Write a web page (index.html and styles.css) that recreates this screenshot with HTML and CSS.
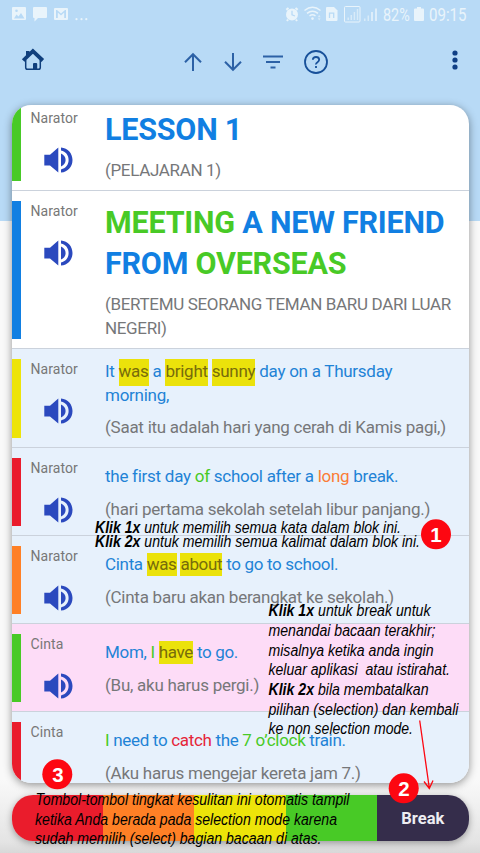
FILE: index.html
```html
<!DOCTYPE html>
<html lang="id">
<head>
<meta charset="utf-8">
<title>Lesson 1</title>
<link rel="stylesheet" href="styles.css">
</head>
<body>
<svg class="defs" aria-hidden="true">
  <symbol id="speaker" viewBox="0 0 29 26">
    <path d="M0.3 7.800H6L14.3 0.6V25.600L6 18.600H0.3Z"/>
    <path d="M17 6.600Q21.600 9 21.600 13.100T17 19.600Z"/>
    <path d="M17 0.400C24 1 28.500 6.300 28.500 13S24 25 17 25.600V22.400C21.800 21.300 24.600 17.700 24.600 13S21.800 4.700 17 3.600Z"/>
  </symbol>
</svg>
<div class="screen">
  <header class="top">
    <div class="status">
      <svg class="status-left" width="78" height="18" viewBox="0 0 78 18">
        <path fill-rule="evenodd" d="M1 0H13Q14 0 14 1V12Q14 13 13 13H1Q0 13 0 12V1Q0 0 1 0ZM2 11.500H12.500L9 6L6.500 9.500L4.500 7.500ZM4.500 2.500A1.300 1.300 0 1 0 4.500 5.100A1.300 1.300 0 1 0 4.500 2.500Z"/>
        <path d="M22 0H34Q35 0 35 1V10Q35 11 34 11H26L22.500 14.500V11H22Q21 11 21 10V1Q21 0 22 0Z"/>
        <path fill-rule="evenodd" d="M43 1H55Q56 1 56 2V12Q56 13 55 13H43Q42 13 42 12V2Q42 1 43 1ZM44 3V11H45.800V5.500L49 8.500L52.200 5.500V11H54V3H53L49 6.500L45 3Z"/>
        <circle cx="64.500" cy="12.200" r="1.100"/><circle cx="69.500" cy="12.200" r="1.100"/><circle cx="74.300" cy="12.200" r="1.100"/>
      </svg>
      <div class="status-right">
        <svg width="94" height="18" viewBox="285 6 94 18">
          <circle cx="293" cy="14.500" r="6"/>
          <path class="line thick" d="M287.300 9.800L289.500 8M298.700 9.800L296.500 8M289 19.500L288 21M297 19.500L298 21"/>
          <path class="cut" d="M293 10.800V14.800L296 16"/>
          <path class="line" d="M305.500 10.500Q313.500 4 321.500 10.500M308 13.300Q313.500 9 319 13.300M310.500 16Q313.500 13.600 316.500 16"/>
          <circle cx="313.500" cy="18.600" r="1.300"/>
          <path class="faint" d="M318.800 17.200L320.200 14.800L321.600 17.200ZM318.800 18.200L320.200 20.600L321.600 18.200Z"/>
          <path d="M328 7H335L338.500 10.500V20Q338.500 21 337.500 21H328Q327 21 327 20V8Q327 7 328 7Z"/>
          <path class="cut" d="M330.500 18V12.500M331 13.200H334.700V18"/>
          <rect class="line thin" x="345.500" y="6.500" width="15.500" height="15.500" rx="1"/>
          <path class="line faint" d="M349.200 20V17.500M352.300 20V15M355.400 20V12M358.500 20V9"/>
          <path class="line faint" d="M365.800 21V18.500M369.300 21V15.500"/>
          <path class="line" d="M373 21V12M377 21V8.500"/>
        </svg>
        <span class="pct">82%</span>
        <svg width="10" height="15" viewBox="0 0 10 15"><path d="M3 0H7V1.500H9Q10 1.500 10 2.500V13Q10 14 9 14H1Q0 14 0 13V2.500Q0 1.500 1 1.500H3Z"/></svg>
        <span class="time">09:15</span>
      </div>
    </div>
    <nav class="toolbar">
      <svg class="home" width="24" height="24" viewBox="0 0 24 24">
        <path class="roof" d="M2.200 12.500L11.900 3.200L21.800 12.500"/>
        <path class="chimney" d="M5 3H8.500V7L5 10Z"/>
        <path class="walls" d="M4.700 12V19.500Q4.700 21.300 6.500 21.300H17.500Q19.300 21.300 19.300 19.500V12"/>
        <path class="door" d="M12 22V16Q12 15 13 15H15.200Q16.200 15 16.200 16V22Z"/>
      </svg>
      <div class="actions">
        <svg width="18" height="20" viewBox="0 0 18 20"><path d="M9 19V3M1 10.200L9 2.200L17 10.200"/></svg>
        <svg width="18" height="20" viewBox="0 0 18 20"><path d="M9 1V17M1 9.800L9 17.800L17 9.800"/></svg>
        <svg class="filter" width="20" height="20" viewBox="0 0 20 20"><path d="M0 4.500H20M3 10H17M7.500 15.500H12.500"/></svg>
        <svg class="help" width="24" height="24" viewBox="0 0 24 24"><circle cx="12" cy="12" r="11"/><path d="M8.800 9.800Q9 7 12 7T15.200 9.600Q15.200 11.100 13.500 12.200T12 14.500M12 15.900V18"/></svg>
      </div>
      <svg class="more" width="6" height="20" viewBox="0 0 6 20"><circle cx="3" cy="3" r="2.600"/><circle cx="3" cy="10" r="2.600"/><circle cx="3" cy="17" r="2.600"/></svg>
    </nav>
  </header>

  <main class="card">
    <section class="row first">
      <i class="bar green-bg"></i>
      <div class="who"><span>Narator</span><svg class="speaker"><use href="#speaker"/></svg></div>
      <div class="copy"><h1 class="l1">LESSON 1</h1><p class="tr t1">(PELAJARAN 1)</p></div>
    </section>
    <section class="row title">
      <i class="bar blue-bg"></i>
      <div class="who"><span>Narator</span><svg class="speaker"><use href="#speaker"/></svg></div>
      <div class="copy">
        <h1 class="l2"><b class="green">MEETING</b> A NEW FRIEND<br>FROM <b class="green">OVERSEAS</b></h1>
        <p class="tr t2">(BERTEMU SEORANG TEMAN BARU DARI LUAR<br>NEGERI)</p>
      </div>
    </section>
    <section class="row tinted tall">
      <i class="bar yellow-bg"></i>
      <div class="who"><span>Narator</span><svg class="speaker"><use href="#speaker"/></svg></div>
      <div class="copy">
        <p class="en e3">It <mark>was</mark> a <mark>bright</mark> <mark>sunny</mark> day on a Thursday<br>morning,</p>
        <p class="tr t3">(Saat itu adalah hari yang cerah di Kamis pagi,)</p>
      </div>
    </section>
    <section class="row tinted">
      <i class="bar red-bg"></i>
      <div class="who"><span>Narator</span><svg class="speaker"><use href="#speaker"/></svg></div>
      <div class="copy">
        <p class="en e4">the first day <b class="green">of</b> school after a <b class="orange">long</b> break.</p>
        <p class="tr t4">(hari pertama sekolah setelah libur panjang.)</p>
      </div>
    </section>
    <section class="row tinted">
      <i class="bar orange-bg"></i>
      <div class="who"><span>Narator</span><svg class="speaker"><use href="#speaker"/></svg></div>
      <div class="copy">
        <p class="en e5">Cinta <mark>was</mark> <mark>about</mark> to go to school.</p>
        <p class="tr t5">(Cinta baru akan berangkat ke sekolah.)</p>
      </div>
    </section>
    <section class="row pink">
      <i class="bar green-bg"></i>
      <div class="who"><span>Cinta</span><svg class="speaker"><use href="#speaker"/></svg></div>
      <div class="copy">
        <p class="en e6">Mom, <b class="green">I</b> <mark>have</mark> to go.</p>
        <p class="tr t6">(Bu, aku harus pergi.)</p>
      </div>
    </section>
    <section class="row tinted last">
      <i class="bar red-bg"></i>
      <div class="who"><span>Cinta</span></div>
      <div class="copy">
        <p class="en e7"><b class="green">I</b> need to <b class="red">catch</b> the <b class="green">7 o’clock</b> train.</p>
        <p class="tr t7">(Aku harus mengejar kereta jam 7.)</p>
      </div>
    </section>
  </main>

  <footer class="levels">
    <span class="red-bg"></span><span class="orange-bg"></span><span class="yellow-bg"></span><span class="green-bg"></span><span class="break">Break</span>
  </footer>

  <svg class="notes" width="480" height="853" viewBox="0 0 480 853">
    <text x="95" y="533" textLength="306" lengthAdjust="spacingAndGlyphs"><tspan class="strong">Klik 1x</tspan> untuk memilih semua kata dalam blok ini.</text>
    <text x="95" y="547" textLength="325" lengthAdjust="spacingAndGlyphs"><tspan class="strong">Klik 2x</tspan> untuk memilih semua kalimat dalam blok ini.</text>
    <text x="268.500" y="616.300" textLength="162" lengthAdjust="spacingAndGlyphs"><tspan class="strong">Klik 1x</tspan> untuk break untuk</text>
    <text x="268.500" y="636" textLength="167" lengthAdjust="spacingAndGlyphs">menandai bacaan terakhir;</text>
    <text x="268.500" y="655.600" textLength="165" lengthAdjust="spacingAndGlyphs">misalnya ketika anda ingin</text>
    <text x="268.500" y="675.300" textLength="181.500" lengthAdjust="spacingAndGlyphs" xml:space="preserve">keluar aplikasi  atau istirahat.</text>
    <text x="268.500" y="695" textLength="160" lengthAdjust="spacingAndGlyphs"><tspan class="strong">Klik 2x</tspan> bila membatalkan</text>
    <text x="268.500" y="714.600" textLength="190" lengthAdjust="spacingAndGlyphs">pilihan (selection) dan kembali</text>
    <text x="268.500" y="734.300" textLength="144.500" lengthAdjust="spacingAndGlyphs">ke non selection mode.</text>
    <text x="35.500" y="805.300" textLength="314" lengthAdjust="spacingAndGlyphs">Tombol-tombol tingkat kesulitan ini otomatis tampil</text>
    <text x="35" y="824.500" textLength="302" lengthAdjust="spacingAndGlyphs">ketika Anda berada pada selection mode karena</text>
    <text x="35" y="844.300" textLength="286.500" lengthAdjust="spacingAndGlyphs">sudah memilih (select) bagian bacaan di atas.</text>
    <path class="arrow" d="M419.700 720.500L429.300 788M424 781.500L429.300 788.500L433 780.500"/>
    <circle cx="436" cy="534.300" r="15"/><circle cx="403.700" cy="788.300" r="15"/><circle cx="57.300" cy="774.300" r="15"/>
    <text class="num" x="436" y="541.700">1</text><text class="num" x="404" y="795.700">2</text><text class="num" x="58" y="781.700">3</text>
  </svg>
</div>
</body>
</html>
```
FILE: styles.css
```css
* { box-sizing: border-box; }
body { margin: 0; font-family: Roboto, "Liberation Sans", sans-serif; }
h1, p { margin: 0; }
b { font-weight: inherit; }
.defs { position: absolute; width: 0; height: 0; }
.screen {
  position: relative;
  width: 480px;
  height: 853px;
  overflow: hidden;
  display: flex;
  flex-direction: column;
  background: linear-gradient(#b8daf6 0, #b8daf6 221px, #f9f9f9 221px, #f9f9f9 780px, #e4e4e4 842px, #d8d8d8 853px);
}
.top { height: 104.5px; flex: none; }

.status {
  height: 30px;
  padding: 7px 13px 0 12px;
  display: flex;
  justify-content: space-between;
  color: #e9f4fb;
}
.status svg { fill: #e9f4fb; }
.status-right { display: flex; align-items: flex-start; font-size: 17.5px; line-height: 16px; }
.status-right > svg:first-child { margin-top: -1px; }
.pct { margin-left: 5px; width: 27px; margin-right: 4px; display: block; transform: scaleX(.82); transform-origin: 0 0; }
.time { margin-left: 5px; width: 38px; display: block; transform: scaleX(.86); transform-origin: 0 0; }
.status .line { fill: none; stroke: #e9f4fb; stroke-width: 1.5; }
.status .thin { stroke-width: 1; }
.status .thick { stroke-width: 2; }
.status .faint { opacity: .65; }
.status .cut { fill: none; stroke: #b8daf6; stroke-width: 1.3; }

.toolbar {
  height: 64px;
  padding: 0 22.5px 0 21px;
  display: flex;
  align-items: center;
  justify-content: space-between;
}
.home { margin-top: -4px; }
.home path { fill: #103f7c; }
.home .roof { fill: none; stroke: #103f7c; stroke-width: 3.8; }
.home .walls { fill: none; stroke: #103f7c; stroke-width: 1.5; }
.actions { display: flex; align-items: center; gap: 21.5px; margin-left: 15px; }
.actions svg { fill: none; stroke: #2c61a6; stroke-width: 2; }
.actions .help { stroke: #17509a; stroke-width: 1.8; margin-left: -1px; }
.more { fill: #103f85; margin-top: -4px; }

.card {
  width: 457px;
  height: 678.5px;
  margin: 0 0 0 11.5px;
  flex: none;
  border-radius: 19px;
  overflow: hidden;
  background: #fff;
  box-shadow: 0 2px 8px rgba(0, 0, 0, .42);
}
.row {
  height: 88px;
  padding: 10px 0 9px;
  display: flex;
  border-bottom: 1px solid #cbd2dc;
}
.first { height: 86.5px; padding-top: 0; }
.title { height: 157.5px; }
.tall { height: 99px; }
.row.last { height: 73px; padding-bottom: 0; border: 0; }
.tinted { background: #e7f1fc; }
.pink { background: #fddcf7; }
.bar { width: 9.5px; flex: none; }
.who { width: 84px; flex: none; padding-left: 9.5px; font-size: 14px; line-height: 20px; letter-spacing: .08px; color: #777; }
.who span { display: block; }
.speaker { display: block; width: 29px; height: 26px; margin: 19px 0 0 13.5px; fill: #2b49be; }
.copy { white-space: nowrap; color: #767779; }
.first .who, .first .copy { padding-top: 3px; }
h1 { color: #117fe2; font-size: 30.5px; line-height: 40.5px; font-weight: 700; letter-spacing: -.22px; }
.tr { font-size: 17px; line-height: 24px; letter-spacing: -.26px; }
.tr.t1, .tr.t2 { letter-spacing: -.34px; }
.en { font-size: 17px; line-height: 24px; letter-spacing: -.27px; color: #1f83d6; }
.en.e5, .en.e6, .en.e7 { letter-spacing: -.32px; }
.l1 { padding-top: 2px; }
.t1 { padding-top: 8px; }
.l2 { padding-top: 2px; }
.t2 { padding-top: 8px; }
.t3 { padding-top: 8px; }
.e4, .e5, .e6, .e7 { padding-top: 6px; }
.t4, .t5, .t6, .t7 { padding-top: 9px; }
mark { color: #776c0b; background: #ebe20b; padding: 1px 0 2px; }
.tall mark { padding: 2px 0 5px; }
.green { color: #48ca26; }
.orange { color: #fb7c36; }
.red { color: #e52539; }
.green-bg { background: #48ca26; }
.blue-bg { background: #117fe2; }
.yellow-bg { background: #ede409; }
.red-bg { background: #ea1c2c; }
.orange-bg { background: #ff8026; }

.levels {
  display: grid;
  grid-template-columns: repeat(5, 1fr);
  width: 457px;
  height: 46px;
  margin: 12px 0 0 11.5px;
  flex: none;
  border-radius: 21px;
  overflow: hidden;
  box-shadow: 0 2px 7px rgba(0, 0, 0, .35);
}
.break {
  background: #352d4b;
  color: #eeedf2;
  font-size: 16.5px;
  font-weight: 700;
  line-height: 48px;
  text-align: center;
}

.notes { position: absolute; left: 0; top: 0; }
.notes text { font: italic 17.3px "Liberation Sans", sans-serif; fill: #000; }
.notes .strong { font-weight: 700; }
.notes circle { fill: #fd0711; }
.notes text.num { font: bold 20.5px "Liberation Sans", sans-serif; fill: #fff; text-anchor: middle; }
.arrow { fill: none; stroke: #fd0711; stroke-width: 1.3; }
```
